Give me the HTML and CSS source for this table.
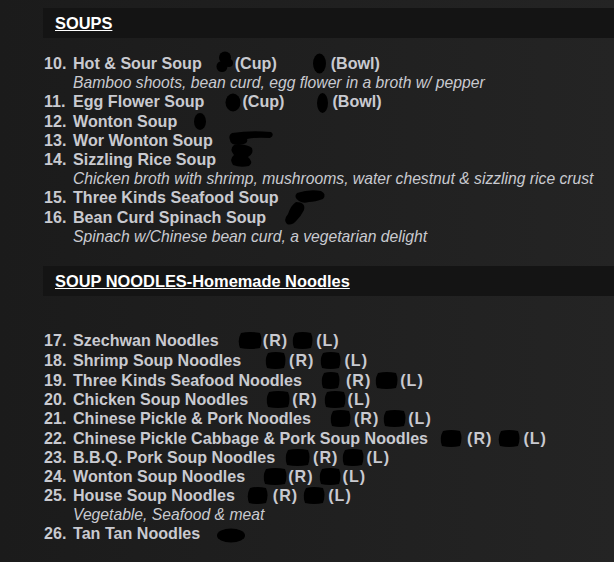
FILE: index.html
```html
<!DOCTYPE html>
<html lang="en">
<head>
<meta charset="utf-8">
<title>Menu</title>
<link rel="stylesheet" href="styles.css">
</head>
<body>
<div class="menu">
  <div class="section-title"><span>SOUPS</span></div>
  <div class="list">
    <div class="item"><span class="num">10.</span><span>Hot &amp; Sour Soup</span><svg class="blot" width="33" height="19" viewBox="0 0 33 19"><circle cx="23" cy="3.5" r="6"/><circle cx="20" cy="12.5" r="5.5"/><circle cx="27" cy="9" r="4"/></svg><span>(Cup)</span><svg class="blot" width="54" height="19" viewBox="0 0 54 19"><ellipse cx="42.5" cy="9.5" rx="6.5" ry="10"/></svg><span>(Bowl)</span></div>
    <div class="desc">Bamboo shoots, bean curd, egg flower in a broth w/ pepper</div>
    <div class="item"><span class="num">11.</span><span>Egg Flower Soup</span><svg class="blot" width="38" height="19" viewBox="0 0 38 19"><ellipse cx="29" cy="10.5" rx="7.5" ry="9"/></svg><span>(Cup)</span><svg class="blot" width="48" height="19" viewBox="0 0 48 19"><ellipse cx="38.5" cy="11" rx="5.5" ry="10"/></svg><span>(Bowl)</span></div>
    <div class="item"><span class="num">12.</span><span>Wonton Soup</span><svg class="blot" width="32" height="19" viewBox="0 0 32 19"><ellipse cx="23" cy="9.5" rx="6" ry="8.5"/></svg></div>
    <div class="item"><span class="num">13.</span><span>Wor Wonton Soup</span><svg class="blot" width="62" height="19" viewBox="0 0 62 19"><path d="M19,2 Q38,-1 58,1 Q62,4 57,7 Q42,6 34,8 Q36,13 26,14 Q17,14 17,9 Q15,4 19,2Z"/></svg></div>
    <div class="item"><span class="num">14.</span><span>Sizzling Rice Soup</span><svg class="blot" width="40" height="19" viewBox="0 0 40 19"><path d="M18,-5 Q30,-7 36,-2 Q38,4 32,7 Q38,12 33,16 Q24,18 17,15 Q13,9 18,5 Q13,-1 18,-5Z"/></svg></div>
    <div class="desc">Chicken broth with shrimp, mushrooms, water chestnut &amp; sizzling rice crust</div>
    <div class="item"><span class="num">15.</span><span>Three Kinds Seafood Soup</span><svg class="blot" width="50" height="19" viewBox="0 0 50 19"><path d="M18,5 Q30,1 42,3 Q48,6 44,11 Q36,14 30,14 Q24,16 20,13 Q14,9 18,5Z"/></svg></div>
    <div class="item"><span class="num">16.</span><span>Bean Curd Spinach Soup</span><svg class="blot" width="45" height="19" viewBox="0 0 45 19"><path d="M30,-6 Q40,-6 38,2 Q35,8 31,12 Q26,18 21,16 Q17,12 22,6 Q25,-3 30,-6Z"/></svg></div>
    <div class="desc">Spinach w/Chinese bean curd, a vegetarian delight</div>
  </div>

  <div class="section-title section-title--second"><span>SOUP NOODLES-Homemade Noodles</span></div>
  <div class="list list--noodles">
    <div class="item item--tall"><span class="num">17.</span><span>Szechwan Noodles</span><svg class="blot" width="44" height="19" viewBox="0 0 44 19"><path d="M22,2 Q31,0 41,2 Q44,9 41,17 Q31,19 21,17 Q18,9 22,2Z"/></svg><span class="size">(R)</span><svg class="blot" width="28" height="19" viewBox="0 0 28 19"><path d="M7,2 Q14.5,0 23,2 Q26,9 23,17 Q14.5,19 6,17 Q3,9 7,2Z"/></svg><span class="size">(L)</span></div>
    <div class="item item--tall"><span class="num">18.</span><span>Shrimp Soup Noodles</span><svg class="blot" width="48" height="19" viewBox="0 0 48 19"><path d="M27,2 Q34.5,0 43,2 Q46,9 43,17 Q34.5,19 26,17 Q23,9 27,2Z"/></svg><span class="size">(R)</span><svg class="blot" width="30" height="19" viewBox="0 0 30 19"><path d="M9,2 Q16.5,0 25,2 Q28,9 25,17 Q16.5,19 8,17 Q5,9 9,2Z"/></svg><span class="size">(L)</span></div>
    <div class="item"><span class="num">19.</span><span>Three Kinds Seafood Noodles</span><svg class="blot" width="44" height="19" viewBox="0 0 44 19"><path d="M22,2 Q28.5,0 36,2 Q39,9 36,17 Q28.5,19 21,17 Q18,9 22,2Z"/></svg><span class="size">(R)</span><svg class="blot" width="29" height="19" viewBox="0 0 29 19"><path d="M7,2 Q15.5,0 25,2 Q28,9 25,17 Q15.5,19 6,17 Q3,9 7,2Z"/></svg><span class="size">(L)</span></div>
    <div class="item"><span class="num">20.</span><span>Chicken Soup Noodles</span><svg class="blot" width="44" height="19" viewBox="0 0 44 19"><path d="M21,2 Q30,0 40,2 Q43,9 40,17 Q30,19 20,17 Q17,9 21,2Z"/></svg><span class="size">(R)</span><svg class="blot" width="30" height="19" viewBox="0 0 30 19"><path d="M9,2 Q17,0 26,2 Q29,9 26,17 Q17,19 8,17 Q5,9 9,2Z"/></svg><span class="size">(L)</span></div>
    <div class="item"><span class="num">21.</span><span>Chinese Pickle &amp; Pork Noodles</span><svg class="blot" width="43" height="19" viewBox="0 0 43 19"><path d="M22,2 Q29.5,0 38,2 Q41,9 38,17 Q29.5,19 21,17 Q18,9 22,2Z"/></svg><span class="size">(R)</span><svg class="blot" width="29" height="19" viewBox="0 0 29 19"><path d="M7,2 Q15.5,0 25,2 Q28,9 25,17 Q15.5,19 6,17 Q3,9 7,2Z"/></svg><span class="size">(L)</span></div>
    <div class="item"><span class="num">22.</span><span>Chinese Pickle Cabbage &amp; Pork Soup Noodles</span><svg class="blot" width="39" height="19" viewBox="0 0 39 19"><path d="M15,2 Q23,0 32,2 Q35,9 32,17 Q23,19 14,17 Q11,9 15,2Z"/></svg><span class="size">(R)</span><svg class="blot" width="31" height="19" viewBox="0 0 31 19"><path d="M9,2 Q17,0 26,2 Q29,9 26,17 Q17,19 8,17 Q5,9 9,2Z"/></svg><span class="size">(L)</span></div>
    <div class="item"><span class="num">23.</span><span>B.B.Q. Pork Soup Noodles</span><svg class="blot" width="38" height="19" viewBox="0 0 38 19"><path d="M13,2 Q22.5,0 33,2 Q36,9 33,17 Q22.5,19 12,17 Q9,9 13,2Z"/></svg><span class="size">(R)</span><svg class="blot" width="28" height="19" viewBox="0 0 28 19"><path d="M7,2 Q15,0 24,2 Q27,9 24,17 Q15,19 6,17 Q3,9 7,2Z"/></svg><span class="size">(L)</span></div>
    <div class="item"><span class="num">24.</span><span>Wonton Soup Noodles</span><svg class="blot" width="43" height="19" viewBox="0 0 43 19"><path d="M21,2 Q30,0 40,2 Q43,9 40,17 Q30,19 20,17 Q17,9 21,2Z"/></svg><span class="size">(R)</span><svg class="blot" width="29" height="19" viewBox="0 0 29 19"><path d="M8,2 Q16,0 25,2 Q28,9 25,17 Q16,19 7,17 Q4,9 8,2Z"/></svg><span class="size">(L)</span></div>
    <div class="item"><span class="num">25.</span><span>House Soup Noodles</span><svg class="blot" width="38" height="19" viewBox="0 0 38 19"><path d="M15,2 Q22.5,0 31,2 Q34,9 31,17 Q22.5,19 14,17 Q11,9 15,2Z"/></svg><span class="size">(R)</span><svg class="blot" width="30" height="19" viewBox="0 0 30 19"><path d="M8,2 Q16,0 25,2 Q28,9 25,17 Q16,19 7,17 Q4,9 8,2Z"/></svg><span class="size">(L)</span></div>
    <div class="desc">Vegetable, Seafood &amp; meat</div>
    <div class="item"><span class="num">26.</span><span>Tan Tan Noodles</span><svg class="blot" width="50" height="19" viewBox="0 0 50 19"><ellipse cx="31" cy="11.5" rx="14" ry="7"/></svg></div>
  </div>
</div>
</body>
</html>
```
FILE: styles.css
```css
html, body {
  margin: 0;
  padding: 0;
}

body {
  min-height: 100vh;
  background: linear-gradient(to right, #1b1b1b, #242424);
  font-family: "Liberation Sans", Arial, sans-serif;
  color: #c9cad0;
}

.menu {
  padding: 8px 0 0 43px;
}

.section-title {
  background: #141414;
  height: 30px;
  line-height: 30px;
  padding-left: 12px;
  color: #ffffff;
  font-weight: bold;
  font-size: 16.4px;
}

.section-title span {
  text-decoration: underline;
}

.section-title--second {
  margin-top: 20px;
}

.list {
  margin-top: 16px;
}

.list--noodles {
  margin-top: 35px;
}

.item {
  display: flex;
  align-items: center;
  height: 19.2px;
  font-weight: bold;
  font-size: 16.1px;
  line-height: 19px;
  white-space: nowrap;
  padding-left: 1px;
}

.item--tall {
  height: 20px;
}

.num {
  flex: none;
  width: 29px;
}

.size {
  letter-spacing: 1px;
}

.desc {
  height: 19.2px;
  line-height: 19px;
  padding-left: 30px;
  font-style: italic;
  font-size: 15.7px;
  white-space: nowrap;
}

.blot {
  flex: none;
  display: block;
  overflow: visible;
  fill: #000;
}
```
